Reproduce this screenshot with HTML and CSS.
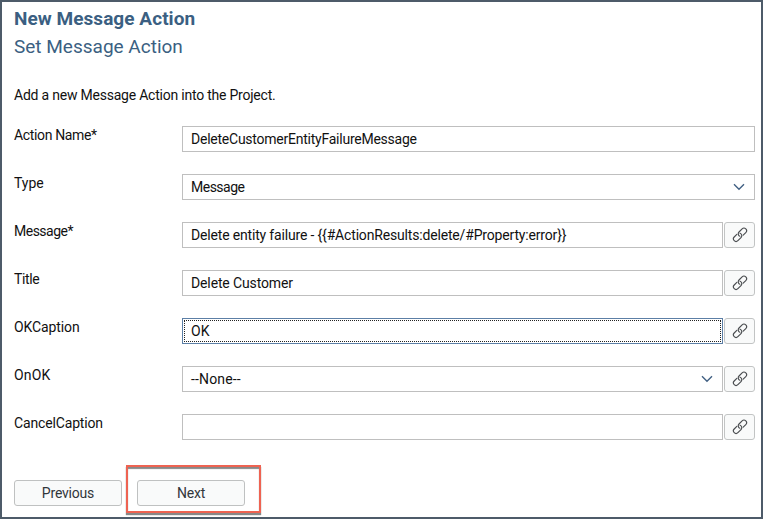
FILE: index.html
```html
<!DOCTYPE html>
<html lang="en">
<head>
<meta charset="utf-8">
<title>New Message Action</title>
<link rel="stylesheet" href="styles.css">
</head>
<body>
<svg class="defs" aria-hidden="true">
  <symbol id="link" viewBox="0 0 16 16">
    <g fill="none" stroke="#4a4d50" stroke-width="1.15" stroke-linecap="round">
      <path d="M-1.500 2.600H2.200A2.600 2.600 0 0 0 2.200 -2.600H-2.200A2.600 2.600 0 0 0 -4.600 1" transform="translate(10.400 5.300) rotate(-45)"/>
      <path d="M1.500 -2.600H-2.200A2.600 2.600 0 0 0 -2.200 2.600H2.200A2.600 2.600 0 0 0 4.600 -1" transform="translate(5.600 10.300) rotate(-45)"/>
    </g>
  </symbol>
  <symbol id="chevron" viewBox="0 0 12 8">
    <path d="M1 1.300l5 5 5-5" fill="none" stroke="#416083" stroke-width="1.400"/>
  </symbol>
</svg>
<main class="dialog">
  <h1 class="title">New Message Action</h1>
  <h2 class="subtitle">Set Message Action</h2>
  <p class="intro">Add a new Message Action into the Project.</p>
  <form class="form">
    <div class="row"><label class="label l-name">Action Name*</label><div class="field"><span class="v-name">DeleteCustomerEntityFailureMessage</span></div></div>
    <div class="row"><label class="label">Type</label><div class="field"><span class="v-type">Message</span><svg class="chevron"><use href="#chevron"/></svg></div></div>
    <div class="row"><label class="label l-message">Message*</label><div class="field"><span class="v-message">Delete entity failure - {{#ActionResults:delete/#Property:error}}</span></div><button type="button" class="link" aria-label="Link"><svg class="icon"><use href="#link"/></svg></button></div>
    <div class="row"><label class="label l-title">Title</label><div class="field"><span class="v-title">Delete Customer</span></div><button type="button" class="link" aria-label="Link"><svg class="icon"><use href="#link"/></svg></button></div>
    <div class="row"><label class="label l-ok">OKCaption</label><div class="field focused"><span>OK</span></div><button type="button" class="link" aria-label="Link"><svg class="icon"><use href="#link"/></svg></button></div>
    <div class="row"><label class="label l-onok">OnOK</label><div class="field"><span class="v-none">--None--</span><svg class="chevron"><use href="#chevron"/></svg></div><button type="button" class="link" aria-label="Link"><svg class="icon"><use href="#link"/></svg></button></div>
    <div class="row"><label class="label l-cancel">CancelCaption</label><div class="field"></div><button type="button" class="link" aria-label="Link"><svg class="icon"><use href="#link"/></svg></button></div>
  </form>
  <footer class="actions">
    <button type="button" class="button">Previous</button>
    <div class="highlight"><button type="button" class="button">Next</button></div>
  </footer>
</main>
</body>
</html>
```
FILE: styles.css
```css
* { box-sizing: border-box; }
body { margin: 0; background: #fff; color: #111; font: 14px/20px Roboto, "Liberation Sans", sans-serif; }
.defs { position: absolute; width: 0; height: 0; }
.dialog { height: 519px; border: 2px solid #4d5b69; padding: 5px 6px 0 12px; overflow: hidden; }
.title, .subtitle { margin: 0; color: #3b5f82; font-size: 19px; line-height: 24px; }
.title { font-weight: 700; letter-spacing: .05px; }
.subtitle { margin-top: 4px; font-weight: 400; }
.intro { margin: 26px 0 0; line-height: 20px; letter-spacing: -.22px; }
.form { margin-top: 21px; }
.row { display: flex; height: 26px; margin-bottom: 22px; }
.label { width: 168px; height: 20px; flex: none; margin-top: -1px; }
.l-name { letter-spacing: -.35px; }
.l-message { letter-spacing: -.5px; }
.l-title { letter-spacing: -.35px; }
.l-ok { letter-spacing: -.1px; }
.l-onok { letter-spacing: .2px; }
.l-cancel { letter-spacing: -.15px; }
.v-name { letter-spacing: -.24px; }
.v-type { letter-spacing: -.5px; }
.v-message { letter-spacing: -.17px; }
.v-title { letter-spacing: -.13px; }
.v-none { letter-spacing: .15px; }
.field { flex: 1; display: flex; align-items: center; justify-content: space-between; border: 1px solid #bfbfbf; padding: 0 9px 0 8px; white-space: nowrap; }
.focused { border-color: #5c7fa6; outline: 1px dotted #222; outline-offset: -3px; }
.chevron { width: 12px; height: 8px; }
.link { width: 31px; height: 26px; margin-left: 1px; padding: 0; display: flex; align-items: center; justify-content: center; border: 1px solid #c2c4c4; border-radius: 3px; background: #f9fafa; }
.icon { width: 16px; height: 16px; }
.actions { display: flex; align-items: flex-start; padding-top: 3px; }
.button { display: block; width: 108px; height: 26px; padding: 0; border: 1px solid #bfc1c1; border-radius: 3px; background: #f9fafa; color: #32363a; font: inherit; letter-spacing: -.2px; }
.actions > .button { margin-top: 15px; }
.highlight { width: 135px; height: 48px; margin-left: 4px; padding: 13px 0 0 9px; border: 2px solid #ee6352; box-shadow: 0 2px 1px #888, inset 0 2px 1px #888; }
```
